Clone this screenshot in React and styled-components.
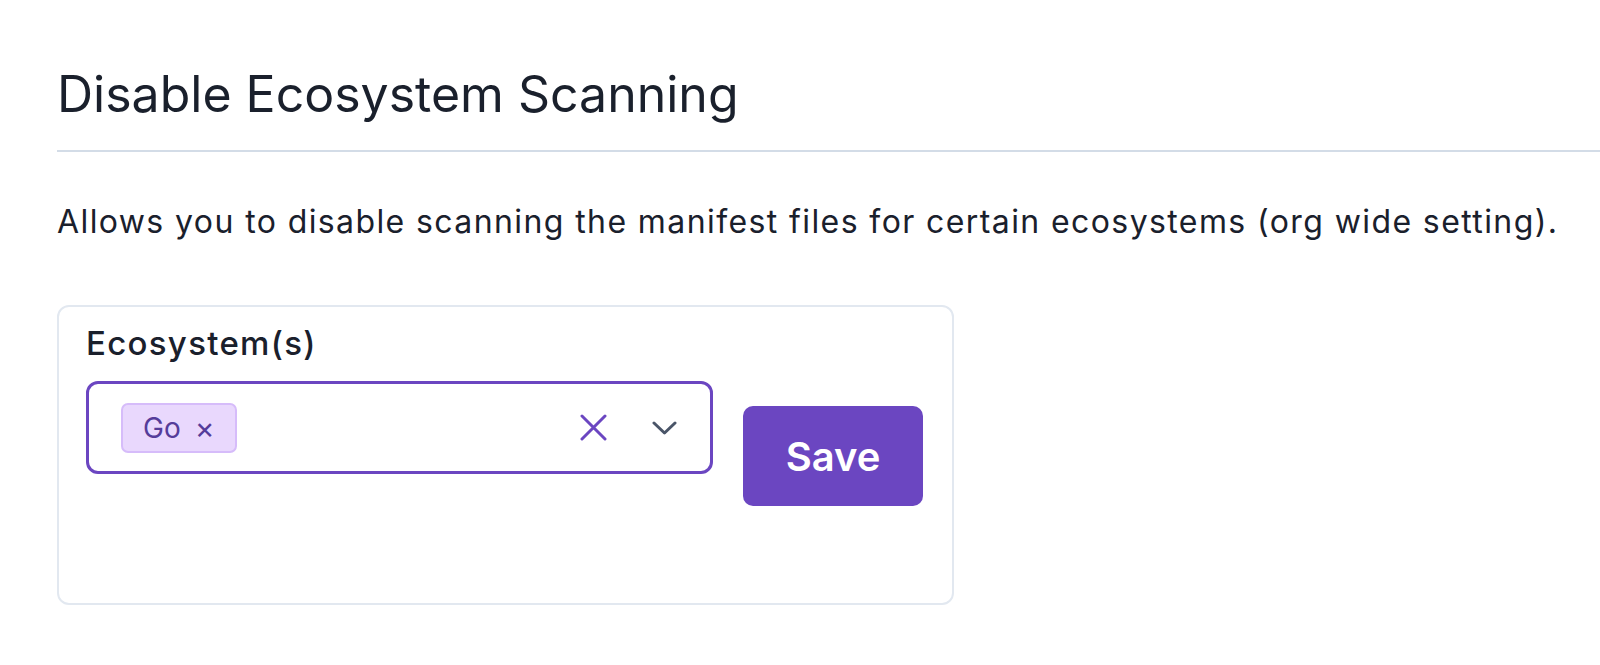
import React from "react";
import styled, { createGlobalStyle } from "styled-components";

const GlobalStyle = createGlobalStyle`
  * {
    box-sizing: border-box;
  }
  body {
    margin: 0;
    background: #ffffff;
    font-family: Inter, "Noto Sans", sans-serif;
    color: #1a202c;
  }
`;

const ClearIcon = () => (
  <svg width="27" height="27" viewBox="0 0 27 27" fill="none">
    <path
      d="M2 2L25 25M25 2L2 25"
      stroke="#6b46c1"
      strokeWidth="3"
      strokeLinecap="round"
    />
  </svg>
);

const ChevronIcon = () => (
  <svg width="25" height="14" viewBox="0 0 25 14" fill="none">
    <path
      d="M2 2L12.5 12L23 2"
      stroke="#4a5568"
      strokeWidth="3"
      strokeLinecap="round"
      strokeLinejoin="round"
    />
  </svg>
);

const App = () => {
  return (
    <>
      <GlobalStyle />
      <Page>
        <Header>
          <Heading>Disable Ecosystem Scanning</Heading>
        </Header>
        <Description>
          Allows you to disable scanning the manifest files for certain
          ecosystems (org wide setting).
        </Description>
        <Card>
          <Label>Ecosystem(s)</Label>
          <Row>
            <Select>
              <Values>
                <Chip>
                  Go <ChipRemove>×</ChipRemove>
                </Chip>
              </Values>
              <Indicators>
                <ClearIcon />
                <ChevronIcon />
              </Indicators>
            </Select>
            <SaveButton>Save</SaveButton>
          </Row>
        </Card>
      </Page>
    </>
  );
};

export default App;

const Page = styled.div`
  padding: 64px 0 0 57px;
`;

const Header = styled.div`
  padding-bottom: 26px;
  border-bottom: 2px solid #d3dce7;
`;

const Heading = styled.h2`
  margin: 0;
  font-size: 50px;
  line-height: 60px;
  font-weight: 400;
  color: #1a202c;
`;

const Description = styled.p`
  margin: 47px 0 0;
  font-size: 32px;
  line-height: 45px;
  letter-spacing: 1.4px;
  color: #1a202c;
  white-space: nowrap;
`;

const Card = styled.div`
  margin-top: 61px;
  width: 897px;
  height: 300px;
  padding: 18px 27px;
  border: 2px solid #e2e8f0;
  border-radius: 12px;
`;

const Label = styled.div`
  font-size: 33px;
  line-height: 36px;
  font-weight: 500;
  letter-spacing: 1.3px;
  color: #1a202c;
`;

const Row = styled.div`
  margin-top: 20px;
  display: flex;
  align-items: flex-start;
  gap: 30px;
`;

const Select = styled.div`
  width: 627px;
  height: 93px;
  border: 3px solid #6b46c1;
  border-radius: 12px;
  padding: 0 33px 0 32px;
  display: flex;
  align-items: center;
  justify-content: space-between;
`;

const Values = styled.div`
  display: flex;
  align-items: center;
  gap: 8px;
`;

const Chip = styled.span`
  display: inline-flex;
  align-items: center;
  gap: 14px;
  height: 50px;
  padding: 0 20px 0 20px;
  background: #e9d8fd;
  border: 2px solid #d6bcfa;
  border-radius: 7px;
  font-size: 28px;
  color: #553c9a;
`;

const ChipRemove = styled.span`
  font-size: 30px;
  line-height: 1;
`;

const Indicators = styled.div`
  display: flex;
  align-items: center;
  gap: 45px;
`;

const SaveButton = styled.button`
  margin-top: 25px;
  width: 180px;
  height: 100px;
  border: none;
  border-radius: 10px;
  background: #6b46c1;
  color: #ffffff;
  font-family: Inter, "Noto Sans", sans-serif;
  font-size: 40px;
  font-weight: 600;
  cursor: pointer;
`;
